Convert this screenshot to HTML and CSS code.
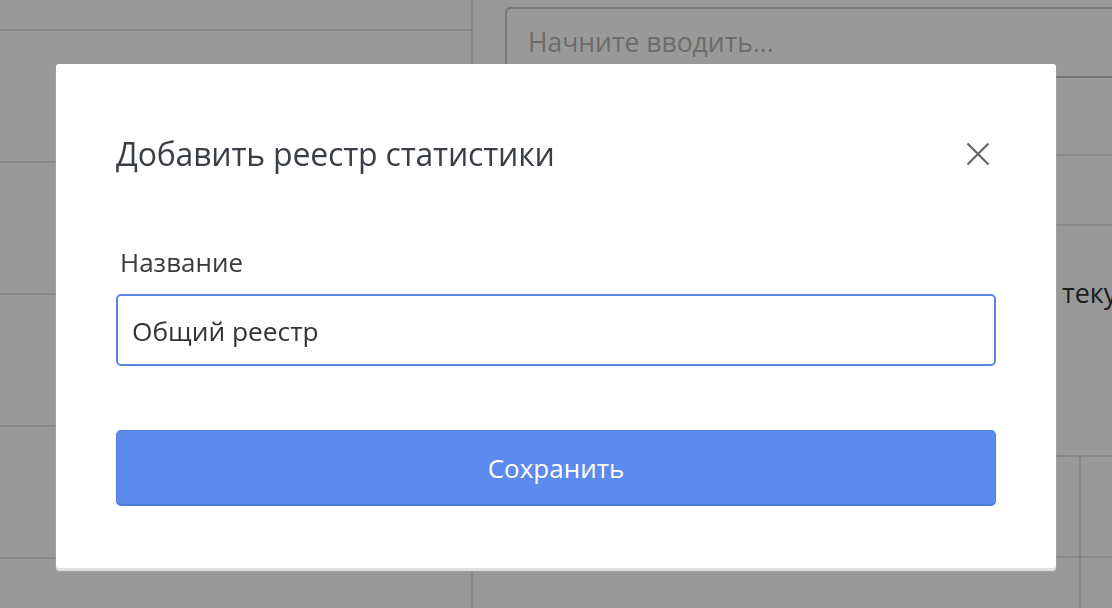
FILE: index.html
```html
<!DOCTYPE html>
<html lang="ru">
<head>
<meta charset="utf-8">
<title>Добавить реестр статистики</title>
<link rel="stylesheet" href="styles.css">
</head>
<body>
<div class="app">
  <aside class="left">
    <div class="lrow lrow-first"></div>
    <div class="lrow"></div>
    <div class="lrow"></div>
    <div class="lrow"></div>
    <div class="lrow"></div>
  </aside>
  <main class="right">
    <div class="search-wrap">
      <div class="search">Начните вводить...</div>
    </div>
    <div class="rrow rrow-a"></div>
    <div class="rrow rrow-b"></div>
    <div class="rblock"><p class="rtext">текущий период</p></div>
    <div class="rcells"><div class="cell"></div><div class="cell cell-last"></div></div>
    <div class="rcells"><div class="cell"></div><div class="cell cell-last"></div></div>
  </main>
</div>

<div class="overlay">
  <div class="modal">
    <div class="modal-header">
      <h2 class="modal-title">Добавить реестр статистики</h2>
      <button class="close-btn" type="button" aria-label="Закрыть">
        <svg width="24" height="24" viewBox="0 0 24 24" aria-hidden="true">
          <path d="M1.5 1.5 L22.5 22.5 M22.5 1.5 L1.5 22.5" stroke="#666" stroke-width="2.2" stroke-linecap="butt" fill="none"/>
        </svg>
      </button>
    </div>
    <label class="field-label" for="name">Название</label>
    <input class="field-input" id="name" type="text" value="Общий реестр">
    <button class="save-btn" type="button">Сохранить</button>
  </div>
</div>
</body>
</html>
```

FILE: styles.css
```css
* { box-sizing: border-box; }

html, body {
  margin: 0;
  padding: 0;
  height: 100%;
  overflow: hidden;
  background: #fff;
  font-family: "Open Sans", "Noto Sans", sans-serif;
  color: #333;
}

.app {
  display: flex;
  height: 608px;
}

.left {
  width: 473px;
  flex: none;
  border-right: 2px solid #e4e4e4;
}

.lrow {
  height: 132px;
  border-bottom: 2px solid #e4e4e4;
}

.lrow-first { height: 31px; }

.right {
  flex: 1;
  overflow: hidden;
  min-width: 0;
}

.search-wrap {
  padding: 7px 0 0 32px;
}

.search {
  width: 700px;
  height: 71px;
  border: 2px solid #c6c6c6;
  border-radius: 6px;
  padding-left: 21px;
  padding-bottom: 2px;
  display: flex;
  align-items: center;
  font-size: 26.5px;
  color: #b4b4b4;
  white-space: nowrap;
}

.rrow {
  border-bottom: 2px solid #e4e4e4;
}

.rrow-a { height: 78px; }
.rrow-b { height: 70px; }

.rblock {
  height: 231px;
  border-bottom: 2px solid #e4e4e4;
  padding: 49px 0 0 589px;
  overflow: hidden;
}

.rtext {
  margin: 0;
  font-size: 27px;
  line-height: 36px;
  color: #333;
  white-space: nowrap;
}

.rcells {
  display: flex;
  height: 101px;
  border-bottom: 2px solid #e4e4e4;
}

.cell {
  width: 608px;
  flex: none;
  border-right: 2px solid #e4e4e4;
}

.cell-last {
  flex: 1;
  border-right: 0;
}

.overlay {
  position: fixed;
  inset: 0;
  background: rgba(0, 0, 0, 0.4);
  display: flex;
  justify-content: center;
  align-items: flex-start;
  padding-top: 64px;
}

.modal {
  width: 1000px;
  background: #fff;
  border-radius: 3px;
  padding: 69px 60px 62px;
  display: flex;
  flex-direction: column;
  box-shadow: 0 3px 1px #e2e2e2;
}

.modal-header {
  display: flex;
  align-items: center;
  justify-content: space-between;
  height: 42px;
}

.modal-title {
  margin: 0;
  font-size: 32px;
  font-weight: 400;
  line-height: 42px;
  letter-spacing: -0.2px;
  color: #3a3e46;
}

.close-btn {
  width: 36px;
  height: 36px;
  padding: 0;
  border: 0;
  background: transparent;
  display: flex;
  align-items: center;
  justify-content: center;
  cursor: pointer;
}

.field-label {
  margin-top: 69px;
  padding-left: 4px;
  font-size: 26px;
  line-height: 36px;
  color: #3a3a3a;
}

.field-input {
  margin-top: 14px;
  height: 72px;
  width: 100%;
  border: 2px solid #5b86e5;
  border-radius: 5px;
  padding: 2px 14px 0;
  font-family: "Open Sans", "Noto Sans", sans-serif;
  font-size: 26.3px;
  color: #333;
  background: #fff;
  outline: none;
}

.save-btn {
  margin-top: 64px;
  height: 76px;
  width: 100%;
  border: 1px solid #4d7ad9;
  border-bottom-width: 2px;
  border-radius: 5px;
  background: #5c8aee;
  color: #fff;
  font-family: "Open Sans", "Noto Sans", sans-serif;
  font-size: 26px;
  cursor: pointer;
}
```
